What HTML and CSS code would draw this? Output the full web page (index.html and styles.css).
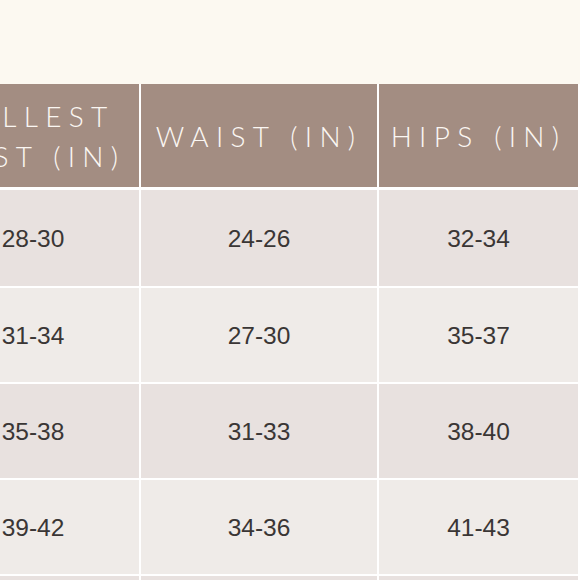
FILE: index.html
```html
<!DOCTYPE html>
<html lang="en">
<head>
<meta charset="utf-8">
<title>Size chart</title>
<link rel="stylesheet" href="styles.css">
</head>
<body>
<div class="page">
  <div class="chart">
    <div class="cell head">FULLEST<br>BUST (IN)</div>
    <div class="cell head">WAIST (IN)</div>
    <div class="cell head">HIPS (IN)</div>

    <div class="cell odd">28-30</div>
    <div class="cell odd">24-26</div>
    <div class="cell odd">32-34</div>

    <div class="cell even">31-34</div>
    <div class="cell even">27-30</div>
    <div class="cell even">35-37</div>

    <div class="cell odd">35-38</div>
    <div class="cell odd">31-33</div>
    <div class="cell odd">38-40</div>

    <div class="cell even">39-42</div>
    <div class="cell even">34-36</div>
    <div class="cell even">41-43</div>

    <div class="cell odd">43-46</div>
    <div class="cell odd">37-39</div>
    <div class="cell odd">44-46</div>
  </div>
</div>
</body>
</html>
```

FILE: styles.css
```css
html, body {
  margin: 0;
  padding: 0;
  background: #fcf9f1;
  overflow: hidden;
}

.page {
  padding-top: 84px;
  height: 580px;
  box-sizing: border-box;
  overflow: hidden;
}

.chart {
  display: grid;
  grid-template-columns: 212px 236px 199px;
  grid-template-rows: 104px 96px 94px 94px 94px 94px;
  column-gap: 2px;
  row-gap: 2px;
  margin-left: -73px;
  padding-right: 2px;
  width: 653px;
  background: #ffffff;
}

.cell {
  display: flex;
  align-items: center;
  justify-content: center;
  text-align: center;
  font-family: "Liberation Sans", Arial, sans-serif;
  font-size: 24.5px;
  color: #3a3635;
  padding-top: 2px;
}

.head {
  background: #a38d82;
  color: #fbf7f3;
  font-family: "Lato", "Open Sans", sans-serif;
  font-weight: 300;
  font-size: 28px;
  letter-spacing: 0.26em;
  line-height: 40px;
  margin-bottom: 1px;
  padding-top: 0;
}

.odd {
  background: #e8e1df;
}

.even {
  background: #efebe8;
}
```
